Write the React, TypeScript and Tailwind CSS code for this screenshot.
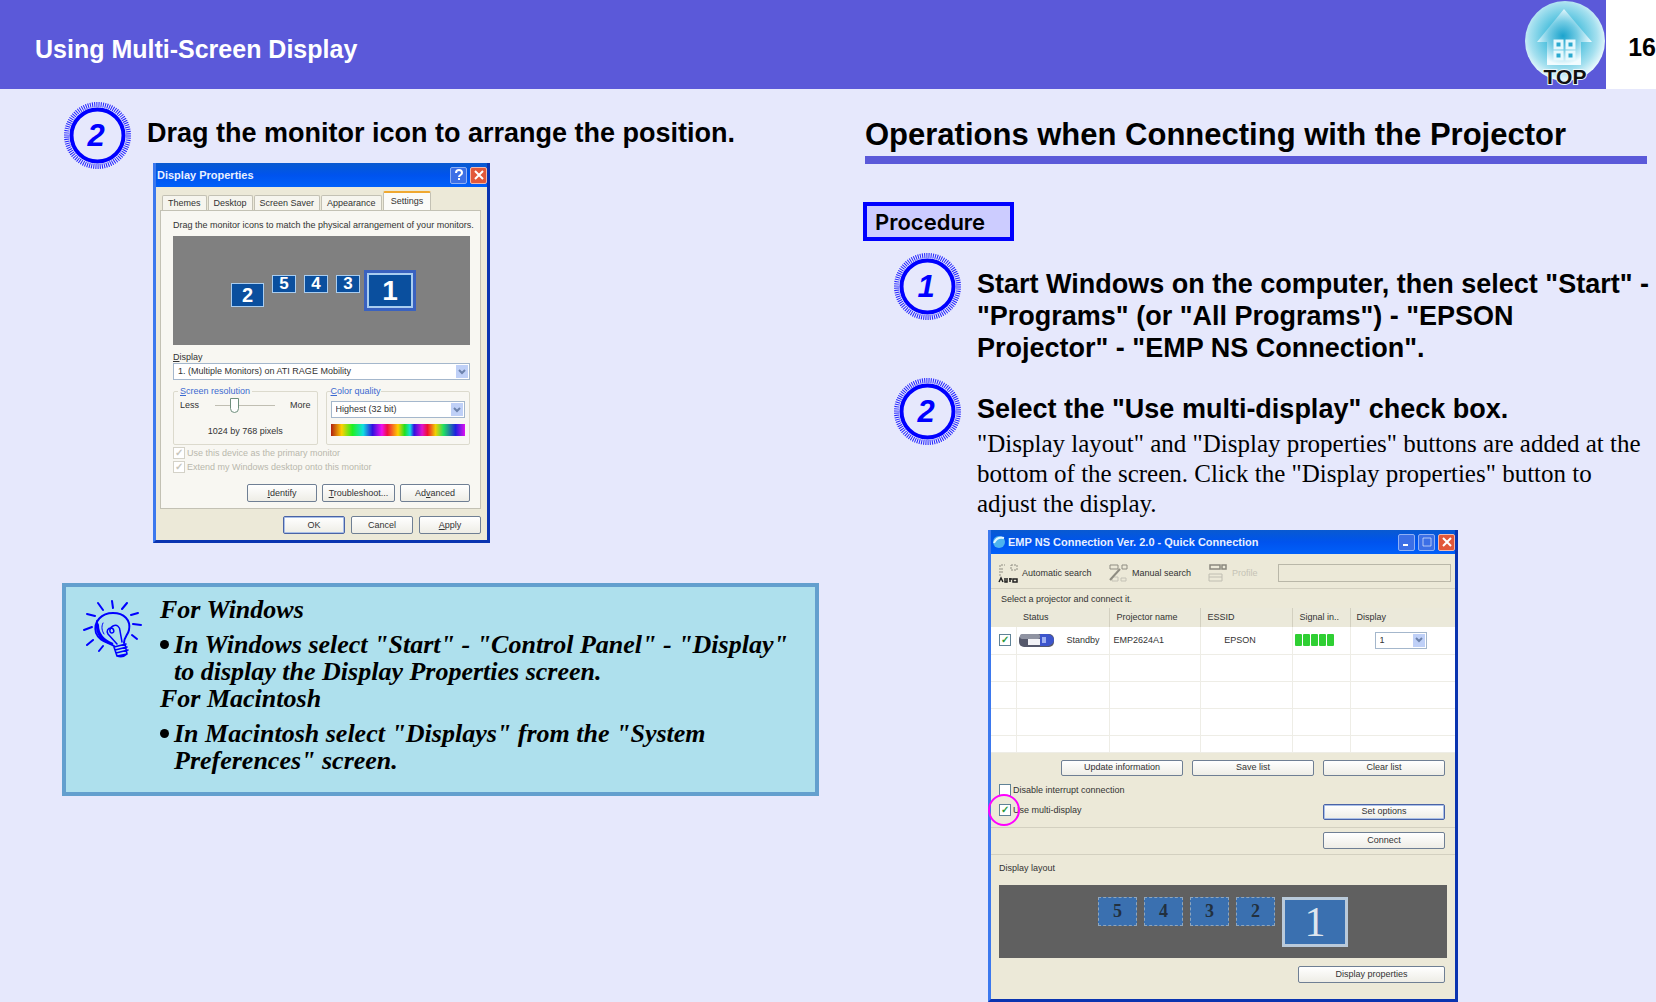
import React from "react";
import { clsx, type ClassValue } from "clsx";
import { twMerge } from "tailwind-merge";

function cn(...inputs: ClassValue[]) {
  return twMerge(clsx(inputs));
}

// Page atoms

const StepBadge = ({ n }: { n: number }) => (
  <svg
    viewBox="0 0 67 67"
    className="w-[67px] h-[67px] shrink-0"
    role="img"
    aria-label={`Step ${n}`}
  >
    <circle cx="33.5" cy="33.5" r="31" fill="none" stroke="#0000ff" strokeWidth="5" strokeDasharray="1 1.16" opacity="0.85" />
    <circle cx="33.5" cy="33.5" r="26" fill="#e6e8fc" stroke="#0000ff" strokeWidth="4" />
    <text
      x="32"
      y="44"
      textAnchor="middle"
      fill="#0000ff"
      className="font-['Liberation_Sans',sans-serif] font-bold italic text-[31px]"
    >
      {n}
    </text>
  </svg>
);

const Step = ({
  n,
  title,
  children,
  className,
}: {
  n: number;
  title: string;
  children?: React.ReactNode;
  className?: string;
}) => (
  <li className={cn("flex gap-4", className)}>
    <StepBadge n={n} />
    <div className="min-w-0 flex-1 pt-[15px]">
      <h3 className="text-[27px] leading-8 font-bold">{title}</h3>
      {children}
    </div>
  </li>
);

const TopLogo = () => (
  <svg viewBox="0 0 82 89" className="w-[82px] h-[89px]" aria-hidden="true">
    <defs>
      <radialGradient id="orb" cx="0.48" cy="0.45" r="0.56">
        <stop offset="0" stopColor="#0f9fcb" />
        <stop offset="0.4" stopColor="#55c3df" />
        <stop offset="0.75" stopColor="#a5e0ef" />
        <stop offset="1" stopColor="#f4fdff" />
      </radialGradient>
      <radialGradient id="house" gradientUnits="userSpaceOnUse" cx="39" cy="36" r="32">
        <stop offset="0" stopColor="#1ba3cd" />
        <stop offset="0.45" stopColor="#74cce4" />
        <stop offset="0.9" stopColor="#f2fcff" />
      </radialGradient>
    </defs>
    <circle cx="41" cy="41" r="40" fill="url(#orb)" />
    <path d="M40 9 L68 42 H57 V65 H23 V42 H13 Z" fill="url(#house)" />
    <g fill="#2ba9cf" stroke="#e4f8fd" strokeWidth="3">
      <rect x="31" y="41" width="7" height="7" />
      <rect x="43" y="41" width="7" height="7" />
      <rect x="31" y="52" width="7" height="7" />
      <rect x="43" y="52" width="7" height="7" />
    </g>
    <text
      x="41"
      y="84"
      textAnchor="middle"
      fill="#111111"
      stroke="#e8f6fa"
      strokeWidth="2"
      paintOrder="stroke"
      className="font-['Liberation_Sans',sans-serif] font-bold text-[21px]"
    >
      TOP
    </text>
  </svg>
);

const BulbIcon = () => (
  <svg
    viewBox="0 0 60 60"
    className="w-[60px] h-[60px] shrink-0"
    fill="none"
    stroke="#0000ff"
    strokeWidth="2"
    strokeLinecap="round"
    aria-hidden="true"
  >
    <path d="M29 2l1 7M15 4l5 7M44 4l-5 6M4 15l8 2M55 14l-7 2M1 31l8-3M58 26l-8-1M4 46l6-5M16 52l4-5M54 40l-5-4" />
    <path d="M31 47C24 43 16 42 13 34C10 22 19 14 30 14C41 14 48 21 46 31C45 36 41 38 41 44" />
    <path d="M14 24C13 35 18 42 30 45C20 41 15 35 15 26Z" strokeWidth="2" />
    <path d="M20 24c-2 4-1 8 1 11" strokeWidth="1" />
    <path d="M34 45L25 35c-2-3 0-6 3-6s4 5 1 5-3-5 1-7 7 1 7 5L39 43" strokeWidth="1.5" />
    <path d="M31 48l12-3M32 51l12-3M33 54l12-3M34 57l10-2M31 48l3 9c3 1 7 1 10-2l-2-10" strokeWidth="1.6" />
  </svg>
);

// Windows XP atoms

const XpButton = ({
  children,
  focused,
  className,
}: {
  children: React.ReactNode;
  focused?: boolean;
  className?: string;
}) => (
  <button
    type="button"
    className={cn(
      "h-[18px] flex items-center justify-center rounded-[2px] border border-[#6f7f94] bg-linear-to-b from-white to-[#eeede6] text-[9px] leading-none text-[#333333]",
      focused && "border-[#4a63a5] shadow-[inset_0_0_0_1px_#a9bfe8]",
      className,
    )}
  >
    {children}
  </button>
);

const XpSelect = ({
  label,
  value,
  className,
}: {
  label: string;
  value: string;
  className?: string;
}) => (
  <div className={cn("relative h-[17px] border border-[#a4b7cc] bg-white", className)}>
    <select
      aria-label={label}
      className="block w-full h-full appearance-none pl-1 text-[9px] leading-none text-[#333333] outline-none"
    >
      <option>{value}</option>
    </select>
    <span className="pointer-events-none absolute right-px top-px bottom-px w-3 flex items-center justify-center bg-[#bfd0f7]">
      <svg viewBox="0 0 8 6" className="w-2 h-1.5" fill="none" stroke="#6d83ad" strokeWidth="2">
        <path d="M1 1l3 3 3-3" />
      </svg>
    </span>
  </div>
);

const boxStyles =
  "w-3 h-3 shrink-0 appearance-none border border-[#5f8296] bg-white flex items-center justify-center checked:before:content-['✓'] before:text-[10px] before:leading-none before:font-bold before:text-[#2f9a3c] disabled:border-[#d4d2c8] disabled:before:text-[#c8c6bc]";

const XpCheck = ({
  label,
  checked,
  disabled,
}: {
  label: string;
  checked?: boolean;
  disabled?: boolean;
}) => (
  <label
    className={cn(
      "flex items-center gap-0.5 text-[9px] leading-3",
      disabled && "text-[#b9b7ad]",
    )}
  >
    <input type="checkbox" defaultChecked={checked} disabled={disabled} className={boxStyles} />
    {label}
  </label>
);

const TitleButton = ({
  label,
  danger,
  children,
}: {
  label: string;
  danger?: boolean;
  children: React.ReactNode;
}) => (
  <button
    type="button"
    aria-label={label}
    className={cn(
      "w-[17px] h-[17px] rounded-[2px] border border-[#8fb0f5] bg-[#3c6fe6] flex items-center justify-center",
      danger && "bg-[#e2583a] border-[#f3b9ab]",
    )}
  >
    <svg viewBox="0 0 12 12" className="w-3 h-3" fill="none" stroke="#ffffff" strokeWidth="2">
      {children}
    </svg>
  </button>
);

const XpWindow = ({
  title,
  icon,
  buttons,
  children,
  className,
}: {
  title: string;
  icon?: React.ReactNode;
  buttons: React.ReactNode;
  children: React.ReactNode;
  className?: string;
}) => (
  <section
    aria-label={title}
    className={cn(
      "flex flex-col border-x-[3px] border-b-[3px] border-l-[#3b78ee] border-r-[#0a34b0] border-b-[#0a34b0] bg-[#ece9d8] text-[#333333]",
      className,
    )}
  >
    <header className="h-6 shrink-0 flex items-center gap-0.5 pl-px bg-linear-to-b from-[#0a5ad0] via-[#0053ee] to-[#0060fa]">
      {icon}
      <span className="flex-1 text-[11px] leading-none font-bold text-[#e8f0ff]">{title}</span>
      <div className="flex gap-[3px]">{buttons}</div>
    </header>
    {children}
  </section>
);

const CrossMark = () => <path d="M2 2l8 8M10 2l-8 8" />;

const tabs = ["Themes", "Desktop", "Screen Saver", "Appearance"];

// Screens placed on the arrangement canvas
const monitors = [
  { n: 2, place: "left-[58px] top-[47px] w-[33px] h-[24px] text-[20px]" },
  { n: 5, place: "left-[99px] top-[39px] w-[24px] h-[18px] text-[17px]" },
  { n: 4, place: "left-[131px] top-[39px] w-[24px] h-[18px] text-[17px]" },
  { n: 3, place: "left-[163px] top-[39px] w-[24px] h-[18px] text-[17px]" },
  { n: 1, place: "left-[194px] top-[37px] w-[46px] h-[35px] text-[28px] border-2 outline-3 outline-[#3a62c0]" },
];

const DisplayProperties = () => (
  <XpWindow
    title="Display Properties"
    className="w-[337px] h-[380px]"
    buttons={
      <>
        <TitleButton label="Help">
          <path d="M3 4c0-4 6-4 6 0 0 2-3 2-3 4M6 9v2" />
        </TitleButton>
        <TitleButton label="Close" danger>
          <CrossMark />
        </TitleButton>
      </>
    }
  >
    <div className="flex-1 flex flex-col pl-1 pr-[6px] pt-1 pb-[6px]">
      <div role="tablist" className="flex items-end text-[9px] leading-none pl-0.5">
        {tabs.map((tab) => (
          <button
            key={tab}
            type="button"
            role="tab"
            className="h-[15px] px-[5px] mr-px border border-b-0 border-[#c3c1b4] rounded-t-[2px] bg-[#f6f5ee]"
          >
            {tab}
          </button>
        ))}
        <button
          type="button"
          role="tab"
          aria-selected="true"
          className="h-[19px] px-[7px] border border-b-0 border-t-2 border-[#c3c1b4] border-t-[#f0a830] rounded-t-[2px] bg-[#fbfbf9]"
        >
          Settings
        </button>
      </div>
      <div className="flex-1 flex flex-col border border-[#c3c1b4] bg-[#f8f7f2] pl-3 pr-[10px] pt-2">
        <p className="text-[9px] leading-3 whitespace-nowrap">
          Drag the monitor icons to match the physical arrangement of your monitors.
        </p>
        <div className="relative h-[109px] mt-[5px] bg-[#808080]">
          {monitors.map((m) => (
            <div
              key={m.n}
              className={cn(
                "absolute flex items-center justify-center border border-[#a9cdf0] bg-[#0a4f9e] font-bold leading-none text-white",
                m.place,
              )}
            >
              {m.n}
            </div>
          ))}
        </div>
        <p className="mt-[6px] text-[9px] leading-3">
          <u>D</u>isplay
        </p>
        <XpSelect label="Display" value="1. (Multiple Monitors) on ATI RAGE Mobility" />
        <div className="flex gap-2 mt-[5px] text-[9px] leading-3">
          <fieldset className="flex-1 h-[60px] border border-[#dcdacd] rounded-[2px] px-1">
            <legend className="px-0.5 text-[#3c6ad0]">
              <u>S</u>creen resolution
            </legend>
            <div className="flex items-center justify-between px-0.5">
              <span>Less</span>
              <input
                type="range"
                aria-label="Screen resolution"
                min={0}
                max={10}
                defaultValue={3}
                className="w-[60px] h-4 appearance-none bg-transparent [&::-webkit-slider-runnable-track]:h-px [&::-webkit-slider-runnable-track]:bg-[#c0beb2] [&::-webkit-slider-thumb]:appearance-none [&::-webkit-slider-thumb]:w-[9px] [&::-webkit-slider-thumb]:h-[15px] [&::-webkit-slider-thumb]:-mt-[7px] [&::-webkit-slider-thumb]:rounded-b-full [&::-webkit-slider-thumb]:border [&::-webkit-slider-thumb]:border-[#6f8f7d] [&::-webkit-slider-thumb]:bg-white"
              />
              <span>More</span>
            </div>
            <p className="mt-3 text-center">1024 by 768 pixels</p>
          </fieldset>
          <fieldset className="flex-1 h-[60px] border border-[#dcdacd] rounded-[2px] px-1">
            <legend className="text-[#3c6ad0]">
              <u>C</u>olor quality
            </legend>
            <XpSelect label="Color quality" value="Highest (32 bit)" className="mt-1" />
            <div className="h-3 mt-[6px] bg-[linear-gradient(90deg,#b02010,#ffd000_8%,#20f020_16%,#10e0e0_24%,#3010e0_31%,#f010f0_38%,#f01040_42%,#ffd000_50%,#20e020_55%,#10e0e0_59%,#3010e0_62%,#e010d0_68%,#f01030_72%,#f0d000_78%,#20e060_84%,#2020e0_93%,#e010f0)]" />
          </fieldset>
        </div>
        <div className="mt-0.5 flex flex-col gap-0.5">
          <XpCheck label="Use this device as the primary monitor" checked disabled />
          <XpCheck label="Extend my Windows desktop onto this monitor" checked disabled />
        </div>
        <div className="mt-[11px] flex justify-end gap-[5px]">
          <XpButton className="w-[70px]">
            <span><u>I</u>dentify</span>
          </XpButton>
          <XpButton className="w-[73px]">
            <span><u>T</u>roubleshoot...</span>
          </XpButton>
          <XpButton className="w-[70px]">
            <span>Ad<u>v</u>anced</span>
          </XpButton>
        </div>
      </div>
      <div className="mt-[7px] flex justify-end gap-[6px]">
        <XpButton focused className="w-[62px]">OK</XpButton>
        <XpButton className="w-[62px]">Cancel</XpButton>
        <XpButton className="w-[62px]">
          <span><u>A</u>pply</span>
        </XpButton>
      </div>
    </div>
  </XpWindow>
);

const SearchIcon = ({ kind }: { kind: "auto" | "manual" | "profile" }) => (
  <svg viewBox="0 0 20 20" className="w-5 h-5 shrink-0" fill="none" stroke="#8f8d82" strokeWidth="1" aria-hidden="true">
    {kind === "auto" && (
      <>
        <path d="M2 13V2h5M13 2h6v5h-6zM4 5v5" strokeDasharray="2 1" />
        <path d="M1 19l2-4 2 4M7 15v4h2v-4M11 16h3M12 15v4M15 16h4v3h-4z" stroke="#222222" strokeWidth="1.5" />
      </>
    )}
    {kind === "manual" && (
      <>
        <path d="M2 2h8v4H2zM14 2h5v4h-5z" />
        <path d="M4 14h6v4H4zM13 15h5v3h-5z" stroke="#c4c2b6" />
        <path d="M2 17L12 6" strokeWidth="2" />
      </>
    )}
    {kind === "profile" && (
      <>
        <path d="M2 2h10v4H2zM14 2h4v4h-4z" stroke="#8a887d" strokeWidth="1.5" />
        <path d="M1 11h13v7H1zM1 14h13" stroke="#c0beb2" />
      </>
    )}
  </svg>
);

const ProjectorIcon = () => (
  <svg viewBox="0 0 36 15" className="w-9 h-[15px]" aria-hidden="true">
    <rect x="0" y="1" width="35" height="13" rx="5" fill="#55586b" />
    <rect x="1" y="1" width="20" height="5" rx="2" fill="#8f93a2" />
    <rect x="9" y="6" width="12" height="6" fill="#f2f2f6" />
    <path d="M21 1h8c8 2 8 10 0 12h-8z" fill="#3d55cc" />
    <path d="M23 4h4v6h-4z" fill="#9fb0f2" />
  </svg>
);

const layoutScreens = [5, 4, 3, 2];

const cell = "border-r border-b border-[#eeede6]";

const QuickConnection = () => (
  <XpWindow
    title="EMP NS Connection Ver. 2.0 - Quick Connection"
    className="w-[470px]"
    icon={
      <svg viewBox="0 0 14 14" className="w-[14px] h-[14px]" aria-hidden="true">
        <circle cx="7" cy="7" r="6" fill="#4db4ee" />
        <path d="M2 8c2-5 6-6 10-5" stroke="#e3f6ff" strokeWidth="2" fill="none" />
      </svg>
    }
    buttons={
      <>
        <TitleButton label="Minimize">
          <path d="M2 9h5" />
        </TitleButton>
        <TitleButton label="Maximize">
          <path d="M2 2h8v8H2z" strokeWidth="1" opacity="0.6" />
        </TitleButton>
        <TitleButton label="Close" danger>
          <CrossMark />
        </TitleButton>
      </>
    }
  >
    <div className="h-[35px] flex items-center gap-1 pl-[7px] pr-1 pt-1 border-b border-[#d3d0c0] text-[9px] leading-none">
      <button type="button" className="w-[106px] flex items-center gap-1">
        <SearchIcon kind="auto" />
        Automatic search
      </button>
      <button type="button" className="w-[96px] flex items-center gap-1">
        <SearchIcon kind="manual" />
        Manual search
      </button>
      <button type="button" disabled className="w-[66px] flex items-center gap-1 text-[#c5c3b6]">
        <SearchIcon kind="profile" />
        Profile
      </button>
      <input
        type="text"
        aria-label="Profile"
        className="h-[18px] min-w-0 flex-1 border border-[#b9b7a8] bg-[#ece9d8]"
      />
    </div>
    <p className="pl-[10px] pt-1 h-[19px] text-[9px] leading-3">
      Select a projector and connect it.
    </p>
    <table className="w-full table-fixed border-collapse bg-white text-[9px] leading-none">
      <colgroup>
        <col className="w-[25px]" />
        <col className="w-[93px]" />
        <col className="w-[91px]" />
        <col className="w-[92px]" />
        <col className="w-[58px]" />
        <col />
      </colgroup>
      <thead>
        <tr className="h-[19px] bg-[#ebe9da] text-left">
          <th />
          <th className="font-normal pl-[7px] border-r border-[#d3d0c0]">Status</th>
          <th className="font-normal pl-[7px] border-r border-[#d3d0c0]">Projector name</th>
          <th className="font-normal pl-[7px] border-r border-[#d3d0c0]">ESSID</th>
          <th className="font-normal pl-[7px] border-r border-[#d3d0c0]">Signal in..</th>
          <th className="font-normal pl-[6px]">Display</th>
        </tr>
      </thead>
      <tbody>
        <tr className="h-[27px]">
          <td className={cn(cell, "pl-2")}>
            <input type="checkbox" aria-label="Select EMP2624A1" defaultChecked className={boxStyles} />
          </td>
          <td className={cell}>
            <div className="flex items-center gap-3 pl-0.5">
              <ProjectorIcon />
              Standby
            </div>
          </td>
          <td className={cn(cell, "pl-1")}>EMP2624A1</td>
          <td className={cn(cell, "text-center pr-3")}>EPSON</td>
          <td className={cell}>
            <div className="flex gap-px pl-0.5" role="img" aria-label="Signal 5 of 5">
              {[1, 2, 3, 4, 5].map((bar) => (
                <span key={bar} className="w-[7px] h-3 rounded-[1px] bg-[#2fcf33]" />
              ))}
            </div>
          </td>
          <td className={cn(cell, "border-r-0 pl-6")}>
            <XpSelect label="Display number" value="1" className="w-[52px]" />
          </td>
        </tr>
        {["h-[27px]", "h-[27px]", "h-[27px]", "h-[17px]"].map((height, idx) => (
          <tr key={idx} className={height}>
            <td className={cell} />
            <td className={cell} />
            <td className={cell} />
            <td className={cell} />
            <td className={cell} />
            <td className={cn(cell, "border-r-0")} />
          </tr>
        ))}
      </tbody>
    </table>
    <div className="flex justify-end gap-[9px] pr-[10px] pt-[7px]">
      <XpButton className="w-[122px] h-4">Update information</XpButton>
      <XpButton className="w-[122px] h-4">Save list</XpButton>
      <XpButton className="w-[122px] h-4">Clear list</XpButton>
    </div>
    <div className="flex items-end justify-between h-[52px] pl-2 pr-[10px] pb-[7px] border-b border-[#d3d0c0]">
      <div className="flex flex-col gap-2 pb-1">
        <XpCheck label="Disable interrupt connection" />
        <div className="relative">
          <XpCheck label="Use multi-display" checked />
          <span className="absolute -left-[11px] -top-[10px] w-8 h-8 rounded-full border-2 border-[#ff00ff]" />
        </div>
      </div>
      <XpButton focused className="w-[122px] h-4">Set options</XpButton>
    </div>
    <div className="flex justify-end h-[27px] pr-[10px] pt-1 border-b border-[#d3d0c0]">
      <XpButton className="w-[122px] h-[17px]">Connect</XpButton>
    </div>
    <div className="pl-2 pr-2 pt-[7px] pb-4">
      <p className="text-[9px] leading-3">Display layout</p>
      <div className="mt-[11px] h-[73px] flex items-start justify-center gap-[7px] pt-3 bg-[#606060]">
        {layoutScreens.map((n) => (
          <div
            key={n}
            className="w-[39px] h-[29px] flex items-center justify-center border border-dashed border-[#8fa6bd] bg-[#3a70b0] font-['Liberation_Serif',serif] font-bold text-[18px] leading-none text-[#22303f]"
          >
            {n}
          </div>
        ))}
        <div className="w-[66px] h-[50px] flex items-center justify-center border-[3px] border-[#b9cadb] bg-[#3a70b0] font-['Liberation_Serif',serif] text-[42px] leading-none text-[#dfe6ee]">
          1
        </div>
      </div>
      <div className="flex justify-end mt-2 pr-0.5">
        <XpButton className="w-[147px] h-[17px]">Display properties</XpButton>
      </div>
    </div>
  </XpWindow>
);

const Bullet = ({ children }: { children: React.ReactNode }) => (
  <li className="mt-2 flex items-start gap-[5px]">
    <span className="w-[9px] h-[9px] mt-[9px] shrink-0 rounded-full bg-black" />
    <span>{children}</span>
  </li>
);

export default function App() {
  return (
    <div className="min-h-screen bg-[#e6e8fc] font-['Liberation_Sans',sans-serif] text-black">
      <header className="h-[89px] flex items-stretch bg-[#5b59d9] font-bold text-[25px] leading-8">
        <h1 className="flex-1 pl-[35px] pt-[33px] text-white">Using Multi-Screen Display</h1>
        <a href="#top" aria-label="Top">
          <TopLogo />
        </a>
        <div className="w-[50px] pt-[31px] text-right bg-white">16</div>
      </header>

      <main className="grid grid-cols-[757fr_784fr] gap-11 pl-[62px] pr-[9px]">
        <div className="pt-[13px]">
          <ol className="pl-0.5">
            <Step n={2} title="Drag the monitor icon to arrange the position.">
              <div className="mt-[14px] ml-[6px]">
                <DisplayProperties />
              </div>
            </Step>
          </ol>

          <aside className="mt-10 flex gap-[17px] border-4 border-[#639fce] bg-[#aee0ed] pl-[17px] pr-4 pt-[9px] pb-[18px]">
            <div className="pt-[3px]">
              <BulbIcon />
            </div>
            <div className="font-['Liberation_Serif',serif] font-bold italic text-[26px] leading-[27px]">
              <p>For Windows</p>
              <ul>
                <Bullet>
                  In Windows select "Start" - "Control Panel" - "Display" to display the Display Properties screen.
                </Bullet>
              </ul>
              <p>For Macintosh</p>
              <ul>
                <Bullet>
                  In Macintosh select "Displays" from the "System Preferences" screen.
                </Bullet>
              </ul>
            </div>
          </aside>
        </div>

        <div className="pt-7">
          <h2 className="ml-0.5 pb-[3px] border-b-8 border-[#5b59d9] text-[31px] leading-9 font-bold">
            Operations when Connecting with the Projector
          </h2>
          <div className="mt-[38px] w-[151px] h-[39px] flex items-center pl-2 border-4 border-[#0000ff] bg-[#ccccff] font-['Inter',sans-serif] font-semibold text-[22px] leading-none">
            Procedure
          </div>
          <ol className="pl-[31px] -mr-[9px]">
            <Step
              n={1}
              className="mt-3"
              title={'Start Windows on the computer, then select "Start" - "Programs" (or "All Programs") - "EPSON Projector"\u00a0- "EMP NS Connection".'}
            />
            <Step n={2} className="mt-[14px]" title={'Select the "Use multi-display" check box.'}>
              <p className="mt-1 font-['Liberation_Serif',serif] text-[25px] leading-[30px]">
                "Display layout" and "Display properties" buttons are added at the bottom of the screen. Click the
                "Display properties" button to adjust the display.
              </p>
              <div className="mt-[11px] ml-[11px]">
                <QuickConnection />
              </div>
            </Step>
          </ol>
        </div>
      </main>
    </div>
  );
}
